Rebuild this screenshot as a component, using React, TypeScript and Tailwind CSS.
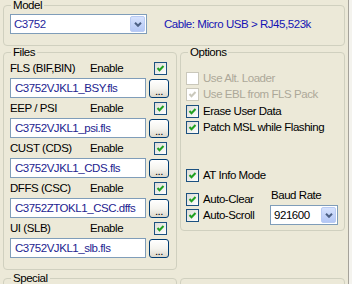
import React from 'react';

function Check({ checked = false, disabled = false }: { checked?: boolean; disabled?: boolean }) {
  return (
    <span
      className={`w-[13px] h-[13px] shrink-0 border flex items-center justify-center ${
        disabled ? 'border-[#CAC8BB] bg-white' : 'border-[#1C5180] bg-linear-to-br from-[#DCDCD7] to-white'
      }`}
    >
      {checked && (
        <svg width="11" height="11" viewBox="0 0 11 11">
          <polyline
            points="2.5,5 4.5,7.2 8.5,3"
            fill="none"
            stroke={disabled ? '#CAC8BB' : '#21A121'}
            strokeWidth="2"
          />
        </svg>
      )}
    </span>
  );
}

function GroupBox({ title, className = '', children }: { title?: string; className?: string; children?: React.ReactNode }) {
  return (
    <div className={`border border-[#D0D0BF] rounded-[4px] ${className}`}>
      {title && (
        <div className="-mt-[6px] ml-[7px] px-[2px] w-fit h-[11px] leading-[11px] bg-[#ECE9D8]">{title}</div>
      )}
      {children}
    </div>
  );
}

function Combo({ value, className = '', textClass = '' }: { value: string; className?: string; textClass?: string }) {
  return (
    <div className={`flex h-[20px] border border-[#7F9DB9] bg-white ${className}`}>
      <span className={`flex-1 pl-[3px] flex items-center ${textClass}`}>{value}</span>
      <span className="m-px w-[15px] rounded-[2px] border border-[#B9CBF3] bg-linear-to-b from-[#D6E2FD] to-[#B4C7F5] flex items-center justify-center">
        <svg width="8" height="5" viewBox="0 0 8 5">
          <polyline points="1,0.8 4,3.8 7,0.8" fill="none" stroke="#4D6185" strokeWidth="2" />
        </svg>
      </span>
    </div>
  );
}

function FileRow({ label, file }: { label: string; file: string }) {
  return (
    <div className="mt-[4px]">
      <div className="flex items-center h-[13px] pl-[6px]">
        <span className="w-[80px]">{label}</span>
        <span className="w-[64px]">Enable</span>
        <Check checked />
      </div>
      <div className="flex items-start mt-[3px] pl-[6px]">
        <div className="w-[136px] h-[20px] border border-[#7F9DB9] bg-white pl-[4px] flex items-center text-[#23238F]">
          {file}
        </div>
        <button className="ml-[3px] mt-px w-[20px] h-[19px] rounded-[3px] border border-[#003C74] bg-linear-to-b from-white via-[#F5F4EF] to-[#DCD8CC] flex items-end justify-center pb-[2px] leading-[8px] text-black">
          ...
        </button>
      </div>
    </div>
  );
}

function Option({ label, checked = false, disabled = false, className = '' }: { label: string; checked?: boolean; disabled?: boolean; className?: string }) {
  return (
    <div className={`flex items-center h-[16px] gap-[4px] ${className}`}>
      <Check checked={checked} disabled={disabled} />
      <span className={disabled ? 'text-[#ACA899]' : ''}>{label}</span>
    </div>
  );
}

export default function App() {
  const files = [
    { label: 'FLS (BIF,BIN)', file: 'C3752VJKL1_BSY.fls' },
    { label: 'EEP / PSI', file: 'C3752VJKL1_psi.fls' },
    { label: 'CUST (CDS)', file: 'C3752VJKL1_CDS.fls' },
    { label: 'DFFS (CSC)', file: 'C3752ZTOKL1_CSC.dffs' },
    { label: 'UI (SLB)', file: 'C3752VJKL1_slb.fls' },
  ];

  return (
    <div className="w-[352px] h-[284px] overflow-hidden bg-[#ECE9D8] flex font-['Liberation_Sans',Arial,sans-serif] text-[11.5px] leading-[13px] tracking-[-0.45px] text-black">
      <div className="w-[348px] pl-[3px] pr-[3px]">
        <GroupBox title="Model" className="mt-[5px] pb-[11px]">
          <div className="flex items-center mt-[3px] pl-[6px]">
            <Combo value="C3752" className="w-[137px]" textClass="text-[#1F1F9C]" />
            <span className="ml-[17px] text-[#1414B4]">Cable: Micro USB &gt; RJ45,523k</span>
          </div>
        </GroupBox>

        <div className="flex items-start gap-[3px] mt-[6px]">
          <GroupBox title="Files" className="w-[174px] pb-[11px]">
            {files.map((f) => (
              <FileRow key={f.label} label={f.label} file={f.file} />
            ))}
          </GroupBox>

          <GroupBox title="Options" className="w-[165px] pb-[5px]">
            <div className="pl-[5px] mt-[12px]">
              <Option label="Use Alt. Loader" disabled />
              <Option label="Use EBL from FLS Pack" checked disabled />
              <Option label="Erase User Data" checked className="mt-px" />
              <Option label="Patch MSL while Flashing" checked />
              <Option label="AT Info Mode" checked className="mt-[32px]" />
            </div>
            <div className="flex mt-[6px]">
              <div className="w-[89px] pl-[5px] pt-[2px]">
                <Option label="Auto-Clear" checked />
                <Option label="Auto-Scroll" checked />
              </div>
              <div className="w-[68px]">
                <div className="pl-px leading-[12px]">Baud Rate</div>
                <Combo value="921600" className="mt-[4px]" />
              </div>
            </div>
          </GroupBox>
        </div>

        <div className="flex items-start gap-[3px] mt-[8px]">
          <GroupBox title="Special" className="w-[174px] h-[30px]" />
          <GroupBox className="w-[165px] h-[30px]" />
        </div>
      </div>
      <div className="w-px bg-[#A5A29A]" />
      <div className="w-[3px] bg-[#F4F3EE]" />
    </div>
  );
}
